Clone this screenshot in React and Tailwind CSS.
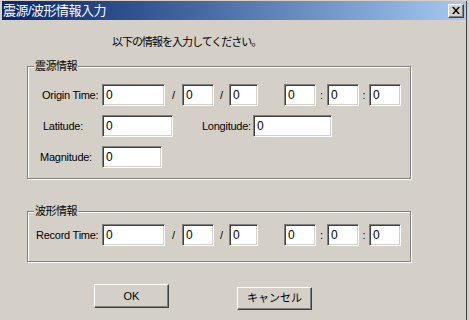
import React from "react";

const jp = { fontFamily: '"Liberation Sans", "Noto Sans CJK JP", sans-serif' };

function Field({ w, value = "0" }) {
  return (
    <div
      className={`${w} h-[22px] bg-white border border-t-[#808080] border-l-[#808080] border-b-white border-r-white shadow-[inset_1px_1px_0_#404040,inset_-1px_-1px_0_#d4d0c8] pl-[3px] flex items-center text-[12px] text-black`}
    >
      {value}
    </div>
  );
}

function Sep({ w, ch }) {
  return <div className={`${w} flex justify-center text-[11px] text-black`}>{ch}</div>;
}

function TimeRow({ label, pad }) {
  return (
    <div className="flex items-center">
      <div className={`w-[74px] ${pad} text-[11px] tracking-[-0.25px] text-black whitespace-nowrap`}>{label}</div>
      <Field w="w-[63px]" />
      <Sep w="w-[17px]" ch="/" />
      <Field w="w-[32px]" />
      <Sep w="w-[15px]" ch="/" />
      <Field w="w-[29px]" />
      <div className="w-[26px]" />
      <Field w="w-[32px]" />
      <Sep w="w-[11px]" ch=":" />
      <Field w="w-[32px]" />
      <Sep w="w-[10px]" ch=":" />
      <Field w="w-[32px]" />
    </div>
  );
}

function Group({ title, h, pt, children }) {
  return (
    <div
      className={`relative ml-[25px] w-[384px] ${h} ${pt} border border-[#808080] shadow-[inset_1px_1px_0_#fff,1px_1px_0_#fff]`}
    >
      <div className="absolute left-[6px] top-[-8px] bg-[#d4d0c8] px-[1px] text-[11px] leading-[14px] text-black tracking-[-0.5px]">
        {title}
      </div>
      {children}
    </div>
  );
}

function Btn({ children, extra }) {
  return (
    <div
      className={`w-[75px] flex items-center justify-center bg-[#d4d0c8] border border-t-white border-l-white border-b-[#404040] border-r-[#404040] shadow-[inset_-1px_-1px_0_#808080] text-[11px] text-black ${extra}`}
    >
      {children}
    </div>
  );
}

export default function App() {
  return (
    <div className="w-[469px] h-[320px] bg-[#d4d0c8] pt-[1px] pl-[2px] pr-[2px] overflow-hidden" style={jp}>
      <div className="w-[465px] h-[319px] border-r border-[#404040] flex flex-col">
        <div className="h-[19px] flex items-center justify-between bg-linear-to-r from-[#0a246a] to-[#a6caf0] pl-[1px] pr-[2px]">
          <span className="text-[13px] tracking-[-0.5px] text-white leading-none">震源/波形情報入力</span>
          <div className="w-[16px] h-[14px] bg-[#d4d0c8] border border-t-white border-l-white border-b-[#404040] border-r-[#404040] shadow-[inset_-1px_-1px_0_#808080] flex items-center justify-center">
            <svg width="8" height="7" viewBox="0 0 8 7">
              <path d="M0 0h2l2 2.5 2-2.5h2l-3 3.5 3 3.5h-2l-2-2.5-2 2.5h-2l3-3.5z" fill="#000" />
            </svg>
          </div>
        </div>

        <div className="ml-[110px] mt-[15px] h-[14px] leading-[14px] text-[11px] text-black tracking-[-1px]">
          以下の情報を入力してください。
        </div>

        <div className="mt-[17px]">
          <Group title="震源情報" h="h-[113px]" pt="pt-[17px]">
            <TimeRow label="Origin Time:" pad="pl-[14px]" />
            <div className="flex items-center mt-[9px]">
              <div className="w-[74px] pl-[15px] text-[11px] tracking-[-0.25px] text-black">Latitude:</div>
              <Field w="w-[71px]" />
              <div className="w-[80px] pl-[29px] text-[11px] tracking-[-0.25px] text-black">Longitude:</div>
              <Field w="w-[79px]" />
            </div>
            <div className="flex items-center mt-[9px]">
              <div className="w-[74px] pl-[12px] text-[11px] tracking-[-0.25px] text-black">Magnitude:</div>
              <Field w="w-[60px]" />
            </div>
          </Group>
        </div>

        <div className="mt-[32px]">
          <Group title="波形情報" h="h-[51px]" pt="pt-[12px]">
            <TimeRow label="Record Time:" pad="pl-[8px]" />
          </Group>
        </div>

        <div className="flex items-start mt-[22px] ml-[92px]">
          <Btn extra="h-[24px]">OK</Btn>
          <Btn extra="h-[23px] ml-[68px] mt-[3px]">キャンセル</Btn>
        </div>
      </div>
    </div>
  );
}
